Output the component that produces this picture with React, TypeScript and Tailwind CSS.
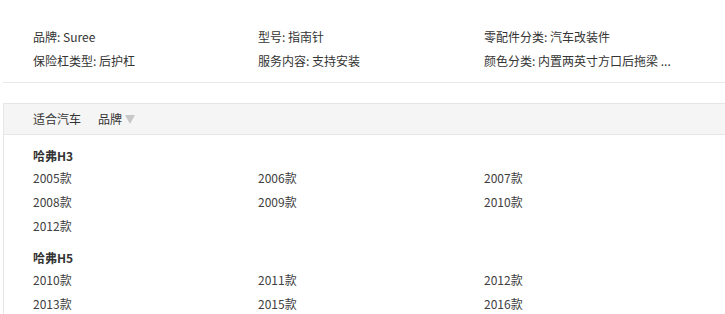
import React from "react";

const attrs: [string, string][] = [
  ["品牌", "Suree"],
  ["型号", "指南针"],
  ["零配件分类", "汽车改装件"],
  ["保险杠类型", "后护杠"],
  ["服务内容", "支持安装"],
  ["颜色分类", "内置两英寸方口后拖梁 ..."],
];

const groups: { name: string; years: string[] }[] = [
  { name: "哈弗H3", years: ["2005款", "2006款", "2007款", "2008款", "2009款", "2010款", "2012款"] },
  { name: "哈弗H5", years: ["2010款", "2011款", "2012款", "2013款", "2015款", "2016款", "2017款"] },
];

export default function App() {
  return (
    <div
      className="w-[725px] h-[314px] overflow-hidden bg-white text-[12px] text-[#333]"
      style={{ fontFamily: '"Noto Sans CJK SC", "Noto Sans", sans-serif' }}
    >
      <div className="ml-[3px] border-b border-[#eaeaea] pt-[25px] pb-[9px] pl-[30px]">
        <div className="grid grid-cols-[225px_226px_1fr]">
          {attrs.map(([k, v], i) => (
            <div key={i} className="h-[24px] leading-[24px] whitespace-nowrap">
              {k}: {v}
            </div>
          ))}
        </div>
      </div>
      <div className="mt-[20px] ml-[3px] border-l border-t border-[#e6e6e6]">
        <div className="h-[31px] bg-[#f5f5f5] border-b border-[#e6e6e6] flex items-center pl-[29px] pb-[1px]">
          <span>适合汽车</span>
          <span className="ml-[17px]">品牌</span>
          <span className="ml-[3px] mt-[1px] w-0 h-0 border-l-[5px] border-r-[5px] border-t-[9px] border-l-transparent border-r-transparent border-t-[#c8c8c8]" />
        </div>
        <div className="pl-[29px] pt-[11px]">
          {groups.map((g, gi) => (
            <div key={gi} className={gi > 0 ? "mt-[10px]" : ""}>
              <div className="h-[20px] leading-[20px] font-bold">{g.name}</div>
              <div className="grid grid-cols-[225px_226px_1fr] text-[#404040]">
                {g.years.map((y, yi) => (
                  <div key={yi} className="h-[24px] leading-[24px]">
                    {y}
                  </div>
                ))}
              </div>
            </div>
          ))}
        </div>
      </div>
    </div>
  );
}
